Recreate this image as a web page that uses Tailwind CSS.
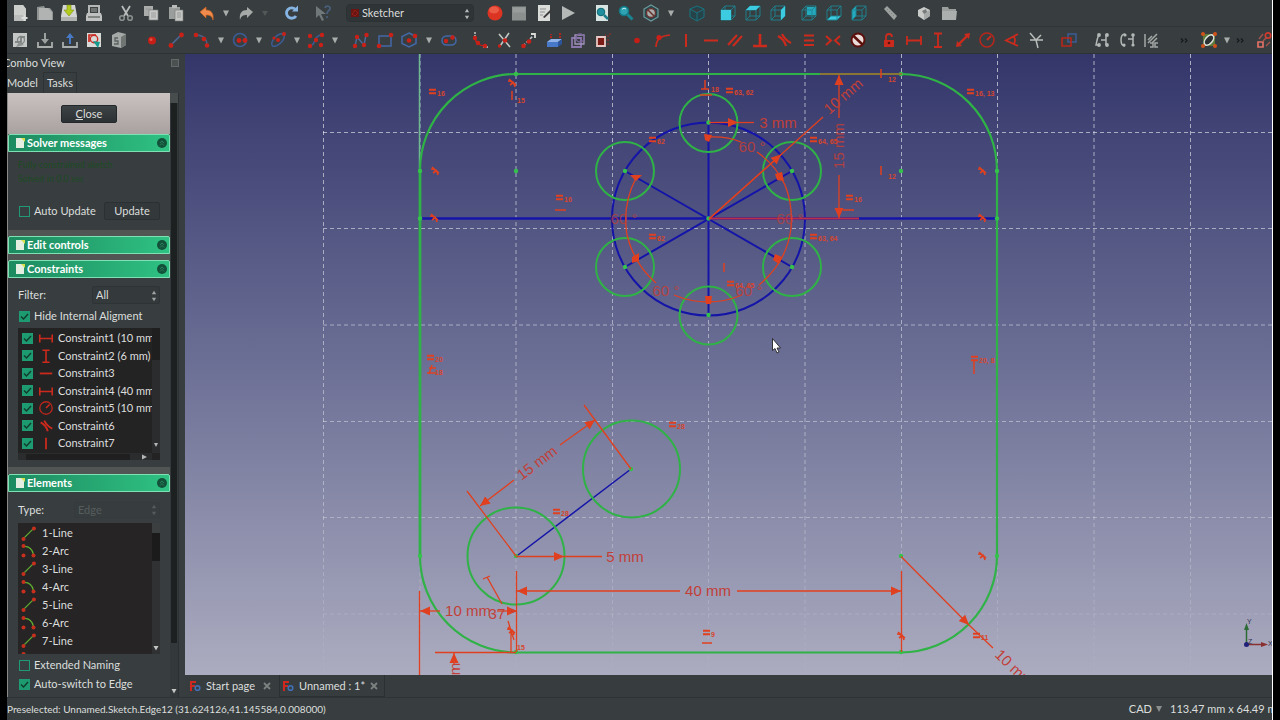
<!DOCTYPE html>
<html lang="en">
  <head>
    <meta charset="UTF-8" />
    <meta name="viewport" content="width=device-width, initial-scale=1.0" />
    <title>Sketcher</title>
    <script src="https://cdn.jsdelivr.net/npm/@tailwindcss/browser@4"></script>
  </head>

  <body class="bg-black">
    <!-- icon shapes, 18x18 each -->
    <svg class="hidden">
      <symbol id="new" viewBox="0 0 18 18"><path d="M3 1h9l3 4v12H3z" fill="#b9bcba"/><path d="M3 1h9l3 4v6H3z" fill="#cccecc"/><path d="M13.500 11v6M10.500 14h6" stroke="#dcdedc" stroke-width="2"/></symbol>
      <symbol id="open" viewBox="0 0 18 18"><path d="M1 3l7-1 1 2h5l3 4v8H1z" fill="#8f9492"/><path d="M3 4h9l4 4v8H3z" fill="#b0b3b1"/></symbol>
      <symbol id="save" viewBox="0 0 18 18"><path d="M3 1h12l2 11v5H1v-5z" fill="#d3d5d3"/><path d="M1 13h16v4H1z" fill="#b0b2b0"/><path d="M7 1h4v5h3l-5 6-5-6h3z" fill="#b3cc1d" stroke="#7d9118" stroke-width=".6"/></symbol>
      <symbol id="print" viewBox="0 0 18 18"><path d="M4 2h10v8H4z" fill="#3e4444" stroke="#b5b8b6" stroke-width="2"/><path d="M2 9h14l1 3v5H1v-5z" fill="#bfc2c0"/><path d="M3 13h12" stroke="#6b706e" stroke-width="1.500"/><path d="M6 5h6M6 7h6" stroke="#a0a2a0"/></symbol>
      <symbol id="cut" viewBox="0 0 18 18"><path d="M5 2l6 10M13 2L7 12" stroke="#b9bcba" stroke-width="1.800" fill="none"/><circle cx="5" cy="14" r="2.300" fill="none" stroke="#8a8f8d" stroke-width="1.600"/><circle cx="13" cy="14" r="2.300" fill="none" stroke="#8a8f8d" stroke-width="1.600"/></symbol>
      <symbol id="copy" viewBox="0 0 18 18"><path d="M2 2h9v10H2z" fill="#a9acaa"/><path d="M7 6h9v10H7z" fill="#c9cbc9" stroke="#7b807e" stroke-width=".7"/><path d="M9 9h5M9 11h5M9 13h5M4 5h5" stroke="#8d918f" stroke-width=".8"/></symbol>
      <symbol id="paste" viewBox="0 0 18 18"><path d="M2 3h11v12H2z" fill="#9a9e9c"/><path d="M5 1h5v3H5z" fill="#b9bcba"/><path d="M8 6h8v11H8z" fill="#c4c6c4" stroke="#777" stroke-width=".6"/><path d="M10 9h4M10 11h4M10 13h4" stroke="#8d918f" stroke-width=".8"/></symbol>
      <symbol id="undo" viewBox="0 0 18 18"><path d="M2 8l6-5v3c5 0 8 3 7 10-1-4-3-5-7-5v3z" fill="#ef8b4c" stroke="#c9601f" stroke-width=".7"/></symbol>
      <symbol id="redo" viewBox="0 0 18 18"><path d="M16 8l-6-5v3c-5 0-8 3-7 10 1-4 3-5 7-5v3z" fill="#a5a9a7"/></symbol>
      <symbol id="caret" viewBox="0 0 10 18"><path d="M2 6.500h6l-3 6z" fill="#a9adab"/></symbol>
      <symbol id="caretoff" viewBox="0 0 10 18"><path d="M2 7h6l-3 5z" fill="#515857"/></symbol>
      <symbol id="refresh" viewBox="0 0 18 18"><path d="M13.500 5.500A5.200 5.200 0 1 0 14 12" fill="none" stroke="#86b5e4" stroke-width="2.800"/><path d="M10 7.500h6V1.500z" fill="#86b5e4"/></symbol>
      <symbol id="whats" viewBox="0 0 18 18"><path d="M2 2v12l3-3 3 6 2-1-3-6h5z" fill="#71787a"/><path d="M11 4c1-3 6-2 5 1-1 2-3 2-3 5M13 12v2" fill="none" stroke="#48607c" stroke-width="1.700"/></symbol>
      <symbol id="record" viewBox="0 0 18 18"><circle cx="9" cy="9" r="7.500" fill="#dc3423"/><ellipse cx="8" cy="6" rx="5" ry="3.500" fill="#ea5a44"/></symbol>
      <symbol id="stop" viewBox="0 0 18 18"><path d="M2 2.500h14v14H2z" fill="#8b8f8e"/><path d="M3 3.500h12v5H3z" fill="#989c9a"/></symbol>
      <symbol id="macro" viewBox="0 0 18 18"><path d="M3 1h12v16H3z" fill="#dadcda"/><path d="M5 5h6M5 8h5M5 11h3" stroke="#8d918f"/><path d="M8 13l8-8 1.500 1.500-8 7.500z" fill="#3a3a3a"/></symbol>
      <symbol id="play" viewBox="0 0 18 18"><path d="M3 2l13 7-13 7z" fill="#b4b8b6"/></symbol>
      <symbol id="fitall" viewBox="0 0 18 18"><path d="M3 1h12v16H3z" fill="#d8e4e2"/><circle cx="8" cy="8" r="3.800" fill="#1d8f9e" stroke="#0f6873"/><path d="M11 11l4 4" stroke="#1a7f8c" stroke-width="2.500"/></symbol>
      <symbol id="fitsel" viewBox="0 0 18 18"><circle cx="7" cy="7" r="4.500" fill="#2fa3b2" stroke="#137886" stroke-width="1.500"/><path d="M5 5.500c1-1.500 3-1.500 4-.5" stroke="#c4eef2" fill="none"/><path d="M10.500 10.500l5 5" stroke="#1b8492" stroke-width="3"/></symbol>
      <symbol id="drawstyle" viewBox="0 0 18 18"><path d="M9 1l7 4v8l-7 4-7-4V5z" fill="#27484b" stroke="#6f9b9e" stroke-width="1.200"/><circle cx="9" cy="9" r="4.500" fill="#a9adab" stroke="#6a3330" stroke-width="1.400"/><path d="M6 6l6 6" stroke="#6a3330" stroke-width="1.600"/></symbol>
      <symbol id="iso" viewBox="0 0 18 18"><path d="M9 2l7 3v8l-7 4-7-4V5zM2 5l7 4 7-4M9 9v8" fill="#26434a" stroke="#197380"/></symbol>
      <symbol id="wire" viewBox="0 0 18 18"><path d="M2 6h10v10H2zM6 2h10v10H6zM2 6l4-4M12 6l4-4M2 16l4-4M12 16l4-4" fill="none" stroke="#1e8593" stroke-width=".9"/></symbol>
      <symbol id="front" viewBox="0 0 18 18"><use href="#wire"/><path d="M2 6h10v10H2z" fill="#3ccbe0"/></symbol>
      <symbol id="top" viewBox="0 0 18 18"><use href="#wire"/><path d="M2 6l4-4h10l-4 4z" fill="#3ccbe0"/></symbol>
      <symbol id="right" viewBox="0 0 18 18"><use href="#wire"/><path d="M12 6l4-4v10l-4 4z" fill="#3ccbe0"/></symbol>
      <symbol id="rear" viewBox="0 0 18 18"><path d="M7 3h9v8H7z" fill="#25aabd"/><use href="#wire"/></symbol>
      <symbol id="bottom" viewBox="0 0 18 18"><path d="M2 16l4-4h10l-4 4z" fill="#3ccbe0"/><use href="#wire"/></symbol>
      <symbol id="left" viewBox="0 0 18 18"><path d="M2 6l4-4v10l-4 4z" fill="#25aabd"/><use href="#wire"/></symbol>
      <symbol id="measure" viewBox="0 0 18 18"><path d="M3 5l3-3 10 10-3 4z" fill="#9da19f"/><path d="M7 5l-1 1M9 7l-1 1M11 9l-1 1M13 11l-1 1" stroke="#7c8280"/></symbol>
      <symbol id="part" viewBox="0 0 18 18"><path d="M3 6l6-3 6 3v6l-6 4-6-4z" fill="#c9cbc9"/><path d="M9 9l6-3v6l-6 4z" fill="#a5a9a7"/><path d="M7 7l4-2 1 3-3 2z" fill="#777c7a"/></symbol>
      <symbol id="group" viewBox="0 0 18 18"><path d="M2 3h6l1 2h7v11H2z" fill="#9a9e9c"/><path d="M2 7h15l-1 9H2z" fill="#abafad"/></symbol>

      <symbol id="sketch" viewBox="0 0 18 18"><path d="M2 2h14v14H2z" fill="#c4c7c5"/><path d="M4 11h6V6h4" fill="none" stroke="#6f7674" stroke-width="1.500"/><circle cx="10" cy="9" r="3.500" fill="none" stroke="#7d8482" stroke-width="1.300"/><path d="M5 16l3-5 5 3z" fill="#8c9290"/></symbol>
      <symbol id="edit" viewBox="0 0 18 18"><path d="M2 11v5h14v-5" fill="none" stroke="#a9adab" stroke-width="1.800"/><path d="M8 2h2v6h3l-4 5-4-5h3z" fill="#9ca19f"/></symbol>
      <symbol id="leave" viewBox="0 0 18 18"><path d="M2 11v5h14v-5" fill="none" stroke="#a9adab" stroke-width="1.800"/><path d="M8 13h2V7h3L9 2 5 7h3z" fill="#4779c4"/></symbol>
      <symbol id="view" viewBox="0 0 18 18"><path d="M2 2h14v14H2z" fill="#d9dad8"/><path d="M4 11V4h7" fill="none" stroke="#c92b23" stroke-width="1.700"/><circle cx="9" cy="8" r="3.700" fill="none" stroke="#c92b23" stroke-width="1.400"/><path d="M8 10l7 1-2 6z" fill="#159a8e"/></symbol>
      <symbol id="section" viewBox="0 0 18 18"><path d="M2 4l6-3 8 2v11l-5 3-9-2z" fill="#a5a9a7"/><path d="M11 6l5-3v11l-5 3z" fill="#6f7573"/><path d="M8 7H5v3h3v3H4" fill="none" stroke="#5a605e" stroke-width="1.300"/></symbol>
      <symbol id="point" viewBox="0 0 18 18"><circle cx="9" cy="9.500" r="4" fill="#c41e16"/><circle cx="8" cy="8.500" r="1.500" fill="#e2503f"/></symbol>
      <symbol id="line" viewBox="0 0 18 18"><path d="M4 14L14 4" stroke="#4c6a9c" stroke-width="1.500"/><g fill="#c92018"><circle cx="4" cy="14.500" r="2.400"/><circle cx="14.500" cy="4" r="2.400"/></g></symbol>
      <symbol id="arc" viewBox="0 0 18 18"><path d="M3 4q11 0 11 11" stroke="#4c5f86" stroke-width="1.500" fill="none"/><g fill="#c92018"><circle cx="3" cy="4" r="2.300"/><circle cx="11" cy="8" r="2.300"/><circle cx="14" cy="14.500" r="2.300"/></g></symbol>
      <symbol id="circle" viewBox="0 0 18 18"><circle cx="9" cy="9" r="6.500" fill="none" stroke="#3c5c94" stroke-width="1.600"/><g fill="#c92018"><circle cx="8" cy="9.500" r="2.400"/><circle cx="14" cy="9.500" r="2.400"/></g></symbol>
      <symbol id="ellipse" viewBox="0 0 18 18"><ellipse cx="9" cy="9" rx="8" ry="4" transform="rotate(-45 9 9)" fill="none" stroke="#3c5c94" stroke-width="1.500"/><g fill="#c92018"><circle cx="9" cy="9" r="2"/><circle cx="15" cy="3" r="2"/><circle cx="5" cy="7" r="1.600"/></g></symbol>
      <symbol id="bspline" viewBox="0 0 18 18"><path d="M3 15C9 15 6 4 15 4" fill="none" stroke="#3c5c94" stroke-width="1.500"/><g fill="#c92018"><circle cx="3" cy="5" r="2.200"/><circle cx="15" cy="4" r="2.200"/><circle cx="9" cy="9" r="2.200"/><circle cx="3" cy="15" r="2.200"/><circle cx="14" cy="14" r="2.200"/></g></symbol>
      <symbol id="polyline" viewBox="0 0 18 18"><path d="M3 15L5 6l7 8 2-10" fill="none" stroke="#4c6a9c" stroke-width="1.400"/><g fill="#c92018"><circle cx="3" cy="15" r="2.200"/><circle cx="5" cy="6" r="2.200"/><circle cx="12" cy="14" r="2.200"/><circle cx="14.500" cy="4" r="2.200"/></g></symbol>
      <symbol id="rect" viewBox="0 0 18 18"><path d="M3 5h12v10H3z" fill="none" stroke="#4368a8" stroke-width="1.500"/><g fill="#c92018"><circle cx="3" cy="15" r="2.300"/><circle cx="15" cy="4" r="2.300"/></g></symbol>
      <symbol id="hexagon" viewBox="0 0 18 18"><path d="M9 2l7 3.500v7L9 16l-7-3.500v-7z" fill="none" stroke="#4368a8" stroke-width="1.500"/><g fill="#c92018"><circle cx="9" cy="9.500" r="2.300"/><circle cx="15" cy="5" r="2.300"/></g></symbol>
      <symbol id="slot" viewBox="0 0 18 18"><rect x="2" y="5" width="14" height="9" rx="4.500" fill="none" stroke="#4368a8" stroke-width="1.500"/><g fill="#c92018"><circle cx="6" cy="10" r="2.200"/><circle cx="12.500" cy="6.500" r="2.200"/></g></symbol>
      <symbol id="fillet" viewBox="0 0 18 18"><path d="M4 1v6M12 16h5" stroke="#c4c6c4" stroke-width="1.500" stroke-dasharray="2 1"/><path d="M4 7q1 8 11 8" fill="none" stroke="#c92018" stroke-width="1.500"/><g fill="#c92018"><circle cx="4" cy="7" r="2.200"/><circle cx="7" cy="12" r="2.200"/><circle cx="14" cy="15" r="2.200"/></g></symbol>
      <symbol id="trim" viewBox="0 0 18 18"><path d="M3 3l11 13M13 2L4 15" stroke="#c4c6c4" stroke-width="1.600"/><circle cx="3.500" cy="15" r="1.700" fill="#c92018"/><circle cx="9" cy="9.500" r="2.300" fill="#c92018"/></symbol>
      <symbol id="extend" viewBox="0 0 18 18"><path d="M3 15L13 5" stroke="#c4c6c4" stroke-width="1.600" stroke-dasharray="3 2"/><path d="M11 3h4v4" fill="none" stroke="#d9dbd9" stroke-width="1.800"/><circle cx="3.500" cy="15" r="2.300" fill="#c92018"/><circle cx="9" cy="10.500" r="2.300" fill="#c92018"/></symbol>
      <symbol id="external" viewBox="0 0 18 18"><path d="M2 11l4-3h11l-4 3z" fill="#8fb3e8"/><path d="M2 11h11v5H2z" fill="#4878c8"/><path d="M13 11l4-3v5l-4 3z" fill="#2c549b"/><path d="M6 7V3M15 7V2" stroke="#c92018" stroke-width="1.600" stroke-dasharray="2 1"/></symbol>
      <symbol id="carbon" viewBox="0 0 18 18"><path d="M3 7h9v9H3z" fill="none" stroke="#8b76ac" stroke-width="1.800"/><path d="M6 4h9v9H6z" fill="none" stroke="#a494bd" stroke-width="1.300"/><circle cx="11" cy="7" r="4" fill="none" stroke="#7a659c" stroke-width="1.400"/></symbol>
      <symbol id="construct" viewBox="0 0 18 18"><path d="M3 6h8v9H3z" fill="#7c1c16" stroke="#e8c8c4" stroke-width="1.800"/><path d="M14 14V4h-3M15 3h2" stroke="#a02922" stroke-dasharray="2 2" fill="none"/></symbol>
      <symbol id="coin" viewBox="0 0 18 18"><circle cx="9" cy="9.500" r="2.800" fill="#c41e16"/></symbol>
      <symbol id="pointon" viewBox="0 0 18 18"><path d="M3 16q0-11 14-12" fill="none" stroke="#cc2a1c" stroke-width="1.700"/><circle cx="6" cy="6.500" r="2.600" fill="#cc2018"/></symbol>
      <symbol id="vert" viewBox="0 0 18 18"><path d="M9 3v13" stroke="#cc2a1c" stroke-width="2"/></symbol>
      <symbol id="horiz" viewBox="0 0 18 18"><path d="M2 9.500h14" stroke="#cc2a1c" stroke-width="2"/></symbol>
      <symbol id="para" viewBox="0 0 18 18"><path d="M2 14L11 4M7 15L16 5" stroke="#cc2a1c" stroke-width="2"/></symbol>
      <symbol id="perp" viewBox="0 0 18 18"><path d="M9 3v12M2 15h14" stroke="#cc2a1c" stroke-width="2.600"/></symbol>
      <symbol id="tang" viewBox="0 0 18 18"><path d="M3 5q6 3 8 10M7 3q3 6 9 9" fill="none" stroke="#cc2a1c" stroke-width="2.200"/></symbol>
      <symbol id="equal" viewBox="0 0 18 18"><path d="M4 4.500h10M4 9.500h10M4 14h10" stroke="#cc2a1c" stroke-width="2"/></symbol>
      <symbol id="symm" viewBox="0 0 18 18"><path d="M2 5l5 4.500L2 14M16 5l-5 4.500 5 4.500" fill="none" stroke="#cc2a1c" stroke-width="2"/></symbol>
      <symbol id="block" viewBox="0 0 18 18"><circle cx="9" cy="9" r="6.500" fill="#eadcd8" stroke="#5c100c" stroke-width="2"/><path d="M4.500 5l9 8.500" stroke="#5c100c" stroke-width="2.500"/></symbol>
      <symbol id="lock" viewBox="0 0 18 18"><path d="M4 9h10v7H4z" fill="#cc2a1c"/><path d="M6 9V6q0-3 3-3t3 3" fill="none" stroke="#cc2a1c" stroke-width="1.800"/><circle cx="9" cy="12" r="1.300" fill="#5c100c"/></symbol>
      <symbol id="hdist" viewBox="0 0 18 18"><path d="M2 5v9M16 5v9M2 9.500h14" stroke="#cc2a1c" stroke-width="1.800"/></symbol>
      <symbol id="vdist" viewBox="0 0 18 18"><path d="M5 2.500h8M5 16h8M9 2v14" stroke="#cc2a1c" stroke-width="1.800"/></symbol>
      <symbol id="dist" viewBox="0 0 18 18"><path d="M4 14L14 4" stroke="#cc2a1c" stroke-width="2.400"/><path d="M2 16l1-6 5 5zM16 2l-1 6-5-5z" fill="#cc2a1c"/></symbol>
      <symbol id="radius" viewBox="0 0 18 18"><circle cx="9" cy="9" r="7" fill="none" stroke="#b8261b" stroke-width="1.500"/><path d="M9 9l4-4" stroke="#cc2a1c" stroke-width="1.800"/></symbol>
      <symbol id="angle" viewBox="0 0 18 18"><path d="M15 3L3 9.500l12 5.500M11 6q2 3 0 7" fill="none" stroke="#cc2a1c" stroke-width="1.800"/></symbol>
      <symbol id="snell" viewBox="0 0 18 18"><path d="M3 2l6 7 2 8M3 9h13M9 9l5-5" fill="none" stroke="#b9bdbb" stroke-width="1.500"/></symbol>
      <symbol id="toggle" viewBox="0 0 18 18"><path d="M8 3h8v8H8z" fill="none" stroke="#3c5c94" stroke-width="1.500"/><path d="M2 7h9v8H2z" fill="none" stroke="#b8261b" stroke-width="1.600"/></symbol>
      <symbol id="dof" viewBox="0 0 18 18"><path d="M6 3q-2 5-3 11h3M13 3v11M8 9h5" fill="none" stroke="#b3b7b5" stroke-width="1.500"/><g fill="#b3b7b5"><circle cx="6" cy="4" r="1.900"/><circle cx="6" cy="14" r="1.900"/><circle cx="14" cy="4" r="1.900"/><circle cx="14" cy="14" r="1.900"/></g></symbol>
      <symbol id="assoc" viewBox="0 0 18 18"><path d="M7 3q-4 0-4 6t4 6M10 8h5M15 3v11" fill="none" stroke="#b3b7b5" stroke-width="1.500"/><g fill="#b3b7b5"><circle cx="7" cy="4" r="1.600"/><circle cx="6" cy="14" r="1.600"/><circle cx="15" cy="4" r="1.800"/><circle cx="15" cy="14" r="1.600"/></g></symbol>
      <symbol id="redund" viewBox="0 0 18 18"><path d="M3 3v13M6 12L15 3M10 12l5-5M6 9l4-4M8 12h3v4H8M16 12h-3v4h3" fill="none" stroke="#a3a7a5" stroke-width="1.500"/></symbol>
      <symbol id="more" viewBox="0 0 10 18"><path d="M2 7.500l2 2-2 2M6 7.500l2 2-2 2" fill="none" stroke="#15191a" stroke-width="1.200"/></symbol>
      <symbol id="bsp" viewBox="0 0 18 18"><path d="M3 3h12v12H3z" fill="#5c7a3a"/><ellipse cx="9" cy="9" rx="6" ry="3.500" transform="rotate(-50 9 9)" fill="#2c3133" stroke="#dfe3e0" stroke-width="1.500"/><g fill="#d3521c"><circle cx="3" cy="3" r="2"/><circle cx="15" cy="3" r="2"/><circle cx="3" cy="15" r="2"/><circle cx="15" cy="15" r="2"/></g></symbol>
      <symbol id="clone" viewBox="0 0 18 18"><path d="M3 11h5v5H3z" fill="none" stroke="#e07064" stroke-width="1.700"/><circle cx="13" cy="4.500" r="2.700" fill="none" stroke="#d33a2c" stroke-width="1.700"/><path d="M4 8l4-5M11 15l4-4M8 10l4-4" stroke="#a4544c" stroke-width="1.400"/></symbol>

      <symbol id="eline" viewBox="0 0 18 18"><path d="M4 14L14 4" stroke="#5faf2f" stroke-width="1.500"/><g fill="#c8301e"><circle cx="3" cy="15.500" r="2.400"/><circle cx="15.500" cy="3" r="2.400"/></g></symbol>
      <symbol id="earc" viewBox="0 0 18 18"><path d="M4 4q9 0 11 10" fill="none" stroke="#5faf2f" stroke-width="1.500"/><g fill="#c8301e"><circle cx="3" cy="3.500" r="2.400"/><circle cx="3" cy="15" r="2.400"/><circle cx="15" cy="15" r="2.400"/></g></symbol>
      <symbol id="note" viewBox="0 0 10 10"><path d="M1 0h8v10H1z" fill="#e4efe2"/><path d="M6 0h4v4z" fill="#d9e04a"/></symbol>
      <symbol id="fold" viewBox="0 0 10 10"><circle cx="5" cy="5" r="5" fill="#12523a"/><path d="M3 5l2-2 2 2M3 7.500l2-2 2 2" fill="none" stroke="#2c7d59"/></symbol>
      <symbol id="spin" viewBox="0 0 8 14"><path d="M1.500 5L4 1l2.500 4zM1.500 9L4 13l2.500-4z" fill="currentColor"/></symbol>
      <symbol id="fc" viewBox="0 0 12 12"><path d="M1 11V1h6v2H3v2h3v2H3v4z" fill="#d0281f"/><circle cx="8.500" cy="8" r="2.300" fill="none" stroke="#3f6fb5" stroke-width="1.600"/></symbol>
      <symbol id="x" viewBox="0 0 8 8"><path d="M1 1l6 6M7 1L1 7" stroke="#7c8281" stroke-width="1.800"/></symbol>
    </svg>

    <div class="mx-[7px] flex h-screen flex-col overflow-hidden border-r border-white bg-[#383e40] font-[Lato,'Open_Sans',sans-serif] text-[11px] leading-4 text-[#dcdedd]">
      <!-- file / view toolbar -->
      <div class="flex h-[27px] shrink-0 items-center overflow-hidden border-b border-[#303537]">
        <div class="ml-1 flex w-[92px] shrink-0 justify-between" data-icons="new open save print"></div>
        <div class="ml-3.5 flex w-[68px] shrink-0 justify-between" data-icons="cut copy paste"></div>
        <div class="ml-[13px] flex w-[72px] shrink-0 justify-between" data-icons="undo caret redo caretoff"></div>
        <div class="ml-3 flex shrink-0" data-icons="refresh"></div>
        <div class="ml-3.5 flex shrink-0" data-icons="whats"></div>
        <div class="relative ml-3.5 w-32 shrink-0">
          <select aria-label="Workbench" class="block h-[18px] w-full appearance-none rounded-sm border border-[#2c3133] bg-[#2f3436] pl-[15px] text-[11px] leading-4 text-[#dcdedd]"><option>Sketcher</option></select>
          <svg class="pointer-events-none absolute top-1 left-1 size-2.5" viewBox="0 0 10 10"><path d="M1 1h8v8H1z" fill="#6b1512"/><path d="M2 6l3-4 3 3-3 3z" fill="none" stroke="#8f2018"/></svg>
          <svg class="pointer-events-none absolute top-1 right-[3px] h-3 w-2 text-[#b3b6b4]"><use href="#spin"/></svg>
        </div>
        <div class="ml-3 flex w-[91px] shrink-0 justify-between" data-icons="record stop macro play"></div>
        <div class="ml-4 flex w-[83px] shrink-0 justify-between" data-icons="fitall fitsel drawstyle caret"></div>
        <div class="ml-3 flex shrink-0" data-icons="iso"></div>
        <div class="ml-[13px] flex w-[68px] shrink-0 justify-between" data-icons="front top right"></div>
        <div class="ml-[13px] flex w-[68px] shrink-0 justify-between" data-icons="rear bottom left"></div>
        <div class="ml-[13px] flex shrink-0" data-icons="measure"></div>
        <div class="ml-4 flex w-[43px] shrink-0 justify-between" data-icons="part group"></div>
      </div>
      <!-- sketcher toolbar -->
      <div class="flex h-[27px] shrink-0 items-center overflow-hidden border-b border-[#2d3234]">
        <div class="ml-1 flex w-[117px] shrink-0 justify-between" data-icons="sketch edit leave view section"></div>
        <div class="ml-[15px] flex w-[42px] shrink-0 justify-between" data-icons="point line"></div>
        <div class="ml-2 flex w-[147px] shrink-0 justify-between" data-icons="arc caret circle caret ellipse caret bspline caret"></div>
        <div class="ml-3 flex w-[106px] shrink-0 justify-between" data-icons="polyline rect hexagon caret slot"></div>
        <div class="ml-[13px] flex w-[141px] shrink-0 justify-between" data-icons="fillet trim extend external carbon construct"></div>
        <div class="ml-4 flex w-[239px] shrink-0 justify-between" data-icons="coin pointon vert horiz para perp tang equal symm block"></div>
        <div class="ml-[13px] flex w-[165px] shrink-0 justify-between" data-icons="lock hdist vdist dist radius angle snell"></div>
        <div class="ml-[15px] flex shrink-0" data-icons="toggle"></div>
        <div class="ml-[15px] flex w-[67px] shrink-0 justify-between" data-icons="dof assoc redund"></div>
        <div class="ml-[19px] flex shrink-0" data-icons="more"></div>
        <div class="ml-[11px] flex w-[45px] shrink-0 justify-between" data-icons="bsp caret more"></div>
        <div class="ml-2.5 flex shrink-0" data-icons="clone"></div>
      </div>

      <div class="flex min-h-0 flex-1">
        <!-- combo view -->
        <aside class="flex w-[178px] shrink-0 flex-col overflow-hidden bg-[#383e40]">
          <div class="flex h-[18px] shrink-0 items-center justify-between pr-1.5">
            <span class="-ml-1">Combo View</span>
            <button aria-label="Float" class="size-2 border border-[#626968] bg-[#4a5150]"></button>
          </div>
          <div class="flex h-[21px] shrink-0 items-center" role="tablist">
            <button role="tab" class="h-full w-9 text-left">Model</button>
            <button role="tab" aria-selected="true" class="h-full w-[34px] border border-b-0 border-[#2d3234] text-center">Tasks</button>
          </div>
          <div class="flex min-h-0 flex-1">
            <div class="flex min-w-0 flex-1 flex-col overflow-hidden border-l border-[#8c8a88] bg-[#515553]">
              <div class="flex h-[41px] shrink-0 items-center justify-center bg-linear-to-b from-[#c9c2c1] to-[#a8a19f]">
                <button class="h-[18px] w-14 rounded-xs border border-[#23282a] bg-linear-to-b from-[#3d4345] to-[#2c3133]"><u>C</u>lose</button>
              </div>

              <section>
                <h2 class="flex h-[18px] items-center rounded-t-xs border border-[#7fe0b4] bg-linear-to-r from-[#1d8a60] to-[#2fc283] pr-1 pl-1.5 font-bold text-white">
                  <svg class="mr-0.5 size-2.5"><use href="#note"/></svg>Solver messages
                  <svg class="ml-auto -mr-0.5 size-2.5"><use href="#fold"/></svg>
                </h2>
                <div class="h-[78px] bg-[#383e40] px-2.5 pt-1.5">
                  <p class="h-3.5 text-[9px] leading-3.5 text-[#1c4a22]">Fully constrained sketch</p>
                  <p class="h-3.5 text-[9px] leading-3.5 text-[#1c4a22]">Solved in 0.0 sec</p>
                  <div class="mt-4 flex items-center justify-between">
                    <label class="flex items-center gap-1 pl-px"><span class="relative size-[11px]"><input type="checkbox" class="block size-[11px] appearance-none border border-[#1f9a72] checked:bg-[#1c9a70]" /></span>Auto Update</label>
                    <button class="h-[18px] w-14 rounded-xs border border-[#2b3032] bg-[#33383a]">Update</button>
                  </div>
                </div>
              </section>

              <section class="mt-1.5">
                <h2 class="flex h-[18px] items-center rounded-t-xs border border-[#7fe0b4] bg-linear-to-r from-[#1d8a60] to-[#2fc283] pr-1 pl-1.5 font-bold text-white">
                  <svg class="mr-0.5 size-2.5"><use href="#note"/></svg>Edit controls
                  <svg class="ml-auto -mr-0.5 size-2.5"><use href="#fold"/></svg>
                </h2>
              </section>

              <section class="mt-1.5">
                <h2 class="flex h-[18px] items-center rounded-t-xs border border-[#7fe0b4] bg-linear-to-r from-[#1d8a60] to-[#2fc283] pr-1 pl-1.5 font-bold text-white">
                  <svg class="mr-0.5 size-2.5"><use href="#note"/></svg>Constraints
                  <svg class="ml-auto -mr-0.5 size-2.5"><use href="#fold"/></svg>
                </h2>
                <div class="h-[189px] bg-[#383e40] px-2.5 pt-2">
                  <div class="flex items-center justify-between">
                    <label for="filter">Filter:</label>
                    <div class="relative w-[68px]">
                      <select id="filter" class="block h-[18px] w-full appearance-none rounded-xs border border-[#2e3335] bg-[#34393b] pl-[3px] text-[11px] leading-4 text-[#dcdedd]"><option>All</option></select>
                      <svg class="pointer-events-none absolute top-1 right-0.5 h-3 w-2 text-[#a0a4a2]"><use href="#spin"/></svg>
                    </div>
                  </div>
                  <label class="mt-1 flex items-center gap-1 pl-px"><span class="relative size-[11px]"><input type="checkbox" checked class="block size-[11px] appearance-none border border-[#1f9a72] checked:bg-[#1c9a70]" /><svg class="pointer-events-none absolute inset-0 size-[11px]" viewBox="0 0 11 11"><path d="M2 5.500l2.500 2.500L9 3" fill="none" stroke="#123b2c" stroke-width="1.400"/></svg></span>Hide Internal Aligment</label>
                  <div class="mt-1 grid h-[132px] grid-cols-[1fr_8px] grid-rows-[1fr_7px] bg-[#242324]">
                    <ul id="constraints" class="flex flex-col overflow-hidden pt-0.5 pl-1"></ul>
                    <div class="flex flex-col items-center justify-between bg-[#2b2c2d]">
                      <span class="h-8 w-2 bg-[#1f1f20]"></span>
                      <svg class="mb-1 h-2 w-2" viewBox="0 0 8 8"><path d="M2 2h4L4 6z" fill="#b3b6b4"/></svg>
                    </div>
                    <div class="flex items-center justify-between bg-[#2b2c2d] pr-1 pl-2">
                      <span class="h-1.5 w-[104px] bg-[#1f1f20]"></span>
                      <svg class="h-2 w-2" viewBox="0 0 8 8"><path d="M2 1.500v5L7 4z" fill="#b3b6b4"/></svg>
                    </div>
                  </div>
                </div>
              </section>

              <section class="mt-[7px] flex-1 bg-[#383e40]">
                <h2 class="flex h-[18px] items-center rounded-t-xs border border-[#7fe0b4] bg-linear-to-r from-[#1d8a60] to-[#2fc283] pr-1 pl-1.5 font-bold text-white">
                  <svg class="mr-0.5 size-2.5"><use href="#note"/></svg>Elements
                  <svg class="ml-auto -mr-0.5 size-2.5"><use href="#fold"/></svg>
                </h2>
                <div class="px-2.5 pt-2.5">
                  <div class="flex items-center justify-between">
                    <label for="type">Type:</label>
                    <div class="relative w-[86px]">
                      <select id="type" disabled class="block h-4 w-full appearance-none rounded-xs border border-[#353b3d] bg-[#373d3f] pl-[3px] text-[11px] leading-3.5 text-[#565c5c] opacity-100"><option>Edge</option></select>
                      <svg class="pointer-events-none absolute top-0.5 right-0.5 h-3 w-2 text-[#565c5c]"><use href="#spin"/></svg>
                    </div>
                  </div>
                  <div class="mt-[5px] flex h-[131px] bg-[#262425]">
                    <ul id="elements" class="flex-1 overflow-hidden pt-px pl-px"></ul>
                    <div class="flex w-2 flex-col bg-[#2f3132]">
                      <span class="h-2.5 bg-[#3b3f40]"></span>
                      <span class="h-7 bg-[#1b1b1c]"></span>
                      <svg class="mt-auto mb-0.5 h-2 w-2" viewBox="0 0 8 8"><path d="M1.500 2h5L4 6.500z" fill="#c3c6c4"/></svg>
                    </div>
                  </div>
                  <label class="mt-[3px] flex items-center gap-1 pl-px"><span class="relative size-[11px]"><input type="checkbox" class="block size-[11px] appearance-none border border-[#1f9a72] checked:bg-[#1c9a70]" /></span>Extended Naming</label>
                  <label class="mt-[3px] flex items-center gap-1 pl-px"><span class="relative size-[11px]"><input type="checkbox" checked class="block size-[11px] appearance-none border border-[#1f9a72] checked:bg-[#1c9a70]" /><svg class="pointer-events-none absolute inset-0 size-[11px]" viewBox="0 0 11 11"><path d="M2 5.500l2.500 2.500L9 3" fill="none" stroke="#123b2c" stroke-width="1.400"/></svg></span>Auto-switch to Edge</label>
                </div>
              </section>
            </div>
            <div class="mr-1.5 flex w-[9px] shrink-0 flex-col items-center border-r border-[#2b3032] bg-[#33383a]">
              <span class="h-2.5 w-full bg-[#474d4d]"></span>
              <span class="h-[540px] w-1.5 bg-[#1d2021]"></span>
              <svg class="mt-auto mb-0.5 h-2 w-2" viewBox="0 0 8 8"><path d="M1.500 2h5L4 6.500z" fill="#c3c6c4"/></svg>
            </div>
          </div>
        </aside>

        <div class="flex min-w-0 flex-1 flex-col">
          <!-- 3D view -->
          <main class="min-h-0 flex-1 overflow-hidden bg-linear-to-b from-[#34366a] to-[#acacc0]">
            <svg class="h-full w-full" viewBox="185 54 1087 621" preserveAspectRatio="xMinYMin slice" font-family="Liberation Sans, Arial, sans-serif">
              <defs>
                <marker id="arrow" viewBox="0 0 10 10" refX="10" refY="5" markerWidth="10" markerHeight="10" markerUnits="userSpaceOnUse" orient="auto-start-reverse"><path d="M0 0.500L10 5 0 9.500z" fill="#e0401f"/></marker>
                <linearGradient id="fade" gradientUnits="userSpaceOnUse" x1="0" y1="54" x2="0" y2="675"><stop offset="0" stop-color="#fff" stop-opacity=".6"/><stop offset=".7" stop-color="#fff" stop-opacity=".36"/><stop offset="1" stop-color="#fff" stop-opacity=".02"/></linearGradient>
                <symbol id="eq" viewBox="0 0 8 8"><path d="M0 2h8M0 6h8" stroke="#e0401f" stroke-width="2.400"/></symbol>
                <symbol id="tan" viewBox="0 0 10 10"><path d="M1 3q6 0 7 6M2 1l7 6M3 7l4-3" fill="none" stroke="#e0401f" stroke-width="1.600"/></symbol>
              </defs>

              <!-- grid -->
              <g fill="none" stroke="url(#fade)" stroke-dasharray="4 3">
                <path d="M323.500 54V675M420 54V675M516 54V675M612.500 54V675M708.500 54V675M805 54V675M901.500 54V675M997.500 54V675M1094 54V675M1190.500 54V675"/>
                <path d="M323 132.500H1272M323 228.500H1272M323 325H1272M323 421.500H1272M323 517.500H1272M323 614H1272"/>
              </g>
              <path d="M419.500 54V172" stroke="#6fb890" stroke-width="1.500"/>

              <!-- construction geometry -->
              <g fill="none" stroke="#1414a8" stroke-width="2">
                <path d="M420 218.500H997" stroke-width="2.500"/>
                <circle cx="708.500" cy="219" r="96.500"/>
                <path d="M708.500 123V315M625 171L792 267M625 267L792 171"/>
                <path d="M516 556.500L631 469" stroke-width="1.500"/>
              </g>

              <!-- outline and holes -->
              <g fill="none" stroke="#2fb246" stroke-width="2">
                <path d="M516 74H901A96.500 96.500 0 0 1 997 171V556A96.500 96.500 0 0 1 901 652.500H516A96.500 96.500 0 0 1 420 556V171A96.500 96.500 0 0 1 516 74Z" stroke-width="2.200"/>
                <path d="M420 171V556" stroke-width="2.600"/>
                <circle cx="708.500" cy="123" r="29"/><circle cx="708.500" cy="315.500" r="29"/>
                <circle cx="625" cy="171" r="29"/><circle cx="625" cy="267" r="29"/>
                <circle cx="792" cy="171" r="29"/><circle cx="792" cy="267" r="29"/>
                <circle cx="631.500" cy="469" r="48.500"/><circle cx="516" cy="556" r="48.500"/>
              </g>
              <g id="dots" fill="#35c24c"></g>

              <!-- dimensions -->
              <g fill="none" stroke="#e0401f" stroke-width="1.300">
                <path d="M820 74H902" stroke="#a8602f" stroke-width="1.600"/>
                <path d="M709 218.500H859" stroke="#b8304a" stroke-width="1.800"/>
                <path d="M839 118V75" marker-end="url(#arrow)"/>
                <path d="M839 175V218" marker-end="url(#arrow)"/>
                <path d="M709 219L823 117"/>
                <path d="M709 219L781 154.500" marker-end="url(#arrow)"/>
                <path d="M709 122.500H738" marker-end="url(#arrow)"/>
                <path d="M738 122.500H754"/>
                <path d="M708 137Q727 136 741 142M757 152A83 83 0 0 1 785 185Q793 205 791 228Q787 262 759 285M636 178Q622 205 627 235Q634 264 656 283M674 295Q708 309 742 295"/>
                <path d="M584 405L631 469M467 491L516 556"/>
                <path d="M514 480L480 506" marker-end="url(#arrow)"/>
                <path d="M560 445L595 420" marker-end="url(#arrow)"/>
                <path d="M516 556.500H564" marker-end="url(#arrow)"/><path d="M564 556.500H602"/>
                <path d="M680 591H517" marker-end="url(#arrow)"/><path d="M737 591H901" marker-end="url(#arrow)"/>
                <path d="M516.500 571V652M901.500 571V652M419.500 591V675M435 652.500H516"/>
                <path d="M440 611H420" marker-end="url(#arrow)"/><path d="M497 611H517" marker-end="url(#arrow)"/>
                <path d="M454 664V653" marker-end="url(#arrow)"/>
                <path d="M483 579L490 576M487 577L502 604M508 621L514 640M511 630V652"/>
                <path d="M901 556.500L969 625" marker-end="url(#arrow)"/><path d="M969 625L993 648"/>
              </g>
              <g fill="#e0401f"><path d="M630 175h12l-6 6zM775 174l7-2 2 9-7-1zM704 134l8 1-3 7-4-2zM632 257l7-4v8l-7 2zM775 254l7 3-3 7-6-4zM705 296h7l-1 8h-5z"/></g>
              <g fill="#c23f38" font-size="15" text-anchor="middle">
                <text x="778" y="128">3 mm</text>
                <text x="844" y="101" transform="rotate(-41 844 97)">10 mm</text>
                <text x="839" y="151" transform="rotate(-90 839 146)" opacity=".85">15 mm</text>
                <text x="752" y="152" opacity=".85">60 °</text>
                <text x="624" y="224" opacity=".7">60 °</text>
                <text x="790" y="224" opacity=".7">60 °</text>
                <text x="666" y="296" opacity=".85">60 °</text>
                <text x="749" y="296" opacity=".85">60 °</text>
                <text x="537" y="468" transform="rotate(-37 537 463)">15 mm</text>
                <text x="625" y="562">5 mm</text>
                <text x="708" y="596">40 mm</text>
                <text x="468" y="616">10 mm</text>
                <text x="502" y="619">37 °</text>
                <text x="455" y="674" transform="rotate(-90 455 669)">m</text>
                <text x="1014" y="673" transform="rotate(44 1014 668)">10 mm</text>
              </g>
              <!-- constraint marks -->
              <g id="marks" fill="#d6452c" font-size="7" font-weight="bold"></g>
              <g stroke="#e0401f" stroke-width="1.500" fill="none">
                <path d="M512 91V100M881 69V78M881 166V175M724 263V272M974 361V374M555 210H566M843 210H854M702 643H712M700 95H712M705 80V89M701 89H709M432 365l-3 9M429 368h7M427 373h9"/>
              </g>

              <!-- axis cross -->
              <path d="M1246.500 644V627" stroke="#2c6b34" stroke-width="1.500"/><path d="M1244 630l2.500-7 2.500 7z" fill="#2c6b34"/>
              <path d="M1247 644.500H1264" stroke="#8a3030" stroke-width="1.500"/><path d="M1261 642l7 2.500-7 2.500z" fill="#8a3030"/>
              <circle cx="1246.500" cy="644.500" r="2.500" fill="#20207c"/>
              <g fill="#303050" font-size="7"><text x="1247" y="624">Y</text><text x="1248" y="644">Z</text><text x="1268" y="646">X</text></g>

              <path d="M772.500 338.500V350.500l2.500-2 2 4.500 2-1-2-4h3.500z" fill="#fff" stroke="#222" stroke-width=".9"/>
            </svg>
          </main>

          <!-- document tabs -->
          <div class="flex h-[22px] shrink-0 items-center bg-[#373d3f]" role="tablist">
            <div class="flex h-full w-[90px] items-center pl-1">
              <svg class="mr-[5px] size-3"><use href="#fc"/></svg><button role="tab">Start page</button>
              <button aria-label="Close Start page" class="ml-auto mr-1"><svg class="size-2"><use href="#x"/></svg></button>
            </div>
            <div class="ml-1 flex h-full w-[106px] items-center border border-t-0 border-[#2b3032] pl-0.5">
              <svg class="mr-[5px] size-3"><use href="#fc"/></svg><button role="tab" aria-selected="true">Unnamed : 1*</button>
              <button aria-label="Close Unnamed" class="ml-auto mr-1.5"><svg class="size-2"><use href="#x"/></svg></button>
            </div>
          </div>
        </div>
      </div>

      <!-- status bar -->
      <footer class="flex h-[23px] shrink-0 items-center justify-between overflow-hidden border-t border-[#2e3335] whitespace-nowrap">
        <span class="text-[10px]">Preselected: Unnamed.Sketch.Edge12 (31.624126,41.145584,0.008000)</span>
        <span class="flex">
          <button class="mr-2 flex items-center">CAD<svg class="ml-1 h-2 w-1.5" viewBox="0 0 6 8"><path d="M0 1h6L3 7z" fill="#8a8f8e"/></svg></button>
          <span class="w-[102px]">113.47 mm x 64.49 mm</span>
        </span>
      </footer>
    </div>

    <script>
      document.querySelectorAll("[data-icons]").forEach((group) => {
        group.innerHTML = group.dataset.icons.split(" ").map((name) => {
          var size = /caret|more/.test(name) ? "h-[18px] w-2.5" : "size-[18px]";
          return `<button aria-label="${name}"><svg class="block ${size}"><use href="#${name}"/></svg></button>`;
        }).join("");
      });

      var constraints = [
        ["hdist", "Constraint1 (10 mm)"],
        ["vdist", "Constraint2 (6 mm)"],
        ["horiz", "Constraint3"],
        ["hdist", "Constraint4 (40 mm)"],
        ["radius", "Constraint5 (10 mm)"],
        ["tang", "Constraint6"],
        ["vert", "Constraint7"],
      ];
      document.getElementById("constraints").innerHTML = constraints.map(([icon, name]) => `
        <li class="flex-1"><label class="flex items-center whitespace-nowrap">
          <span class="relative size-[11px] shrink-0"><input type="checkbox" checked class="block size-[11px] appearance-none border border-[#1f9a72] checked:bg-[#1c9a70]" /><svg class="pointer-events-none absolute inset-0 size-[11px]" viewBox="0 0 11 11"><path d="M2 5.500l2.500 2.500L9 3" fill="none" stroke="#123b2c" stroke-width="1.400"/></svg></span>
          <svg class="mr-1 ml-[5px] size-4 shrink-0"><use href="#${icon}"/></svg>${name}
        </label></li>`).join("");

      // the last row is scrolled almost out of view
      var elements = ["1-Line", "2-Arc", "3-Line", "4-Arc", "5-Line", "6-Arc", "7-Line", ""];
      document.getElementById("elements").innerHTML = elements.map((name, i) => `
        <li class="flex h-[18px] items-center not-first:-mt-px not-first:h-[19px]"><svg class="mr-1.5 ml-0.5 size-[15px]"><use href="#${i % 2 ? "earc" : "eline"}"/></svg>${name}</li>`).join("");

      var dots = [[516, 74], [901, 74], [420, 171], [516, 171], [901, 171], [997, 171], [420, 218.5], [997, 218.5], [708.5, 122.5], [625, 171], [792, 171], [625, 267], [792, 267], [708.5, 315], [708.5, 218.5], [631, 469], [516, 556], [901, 556], [997, 556], [420, 556], [516, 652], [901, 652]];
      document.getElementById("dots").innerHTML = dots.map(([x, y]) => `<circle cx="${x}" cy="${y}" r="2.200"/>`).join("");

      // kind, x, y, label
      var marks = [
        ["eq", 429, 88, "16"], ["tan", 507, 78, ""], ["", 509, 95, "15"], ["eq", 726, 87, "63, 62"], ["", 703, 84, "18"],
        ["eq", 649, 136, "62"], ["eq", 810, 136, "64, 65"], ["eq", 967, 88, "16, 13"], ["", 880, 74, "12"], ["", 880, 171, "12"],
        ["eq", 556, 194, "16"], ["eq", 846, 194, "16"], ["eq", 649, 233, "62"], ["eq", 810, 233, "63, 64"], ["eq", 727, 280, "64, 65"],
        ["eq", 427, 354, "20"], ["", 427, 367, "18"], ["eq", 971, 355, "20, 8"], ["eq", 669, 421, "28"], ["eq", 553, 508, "28"],
        ["eq", 703, 629, "9"], ["eq", 973, 632, "11"], ["", 509, 642, "15"],
        ["tan", 430, 166, ""], ["tan", 429, 213, ""], ["tan", 977, 166, ""], ["tan", 977, 213, ""], ["tan", 977, 551, ""], ["tan", 896, 631, ""], ["tan", 506, 626, ""],
      ];
      document.getElementById("marks").innerHTML = marks.map(([kind, x, y, label]) => {
        var size = kind == "tan" ? 10 : 7;
        return (kind ? `<use href="#${kind}" x="${x}" y="${y}" width="${size}" height="${size}"/>` : "") +
          `<text x="${x + 8}" y="${y + 8}">${label}</text>`;
      }).join("");
    </script>
  </body>
</html>
